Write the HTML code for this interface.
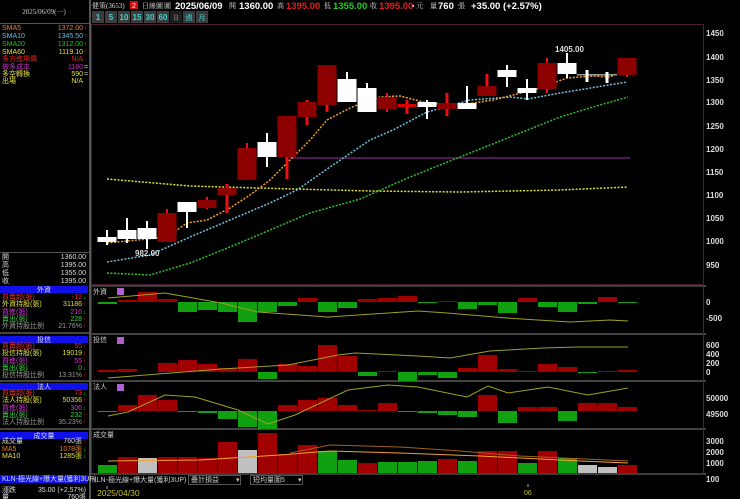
<!DOCTYPE html>
<html><head><meta charset="utf-8"><style>
html,body{margin:0;padding:0;background:#000;width:740px;height:499px;overflow:hidden}
svg{display:block}
text{font-family:"Liberation Sans","Noto Sans CJK TC",sans-serif}
.l{font-size:7px;font-family:"Liberation Serif","Noto Serif CJK SC",serif}
.ax{font-size:8px;fill:#ddd;font-weight:bold}
</style></head><body>
<svg width="740" height="499" viewBox="0 0 740 499" xmlns="http://www.w3.org/2000/svg">
<rect width="740" height="499" fill="#000"/>
<!-- left panel separators -->
<rect x="89" y="0" width="2" height="499" fill="#555"/>
<rect x="0" y="23" width="89" height="1" fill="#555"/>
<text x="44" y="14" class="l" fill="#ccc" text-anchor="middle">2025/06/09(一)</text>
<g class="l">
<text x="2" y="30" fill="#e08040">SMA5</text><text x="83" y="30" fill="#e08040" text-anchor="end">1372.00</text>
<text x="2" y="38" fill="#60c0e0">SMA10</text><text x="83" y="38" fill="#60c0e0" text-anchor="end">1345.50</text>
<text x="2" y="46" fill="#20c020">SMA20</text><text x="83" y="46" fill="#20c020" text-anchor="end">1312.00</text>
<text x="2" y="54" fill="#e0e040">SMA60</text><text x="83" y="54" fill="#e0e040" text-anchor="end">1119.10</text>
<text x="2" y="61" fill="#e02020">多方進場價</text><text x="83" y="61" fill="#e02020" text-anchor="end">N/A</text>
<text x="2" y="69" fill="#c030c0">做多成本</text><text x="83" y="69" fill="#c030c0" text-anchor="end">1180</text>
<text x="2" y="76" fill="#e0e040">多空轉換</text><text x="83" y="76" fill="#e0e040" text-anchor="end">590</text>
<text x="2" y="83" fill="#e0e040">出場</text><text x="83" y="83" fill="#e0e040" text-anchor="end">N/A</text>
</g>
<g fill="#f22" font-size="7"><text x="84" y="30">↑</text><text x="84" y="38">↑</text><text x="84" y="46">↑</text><text x="84" y="54">↑</text></g>
<g fill="#ccc" font-size="7"><text x="84" y="69">=</text><text x="84" y="76">=</text></g>
<rect x="0" y="252" width="89" height="1" fill="#555"/>
<g class="l" fill="#ddd">
<text x="2" y="259">開</text><text x="86" y="259" text-anchor="end">1360.00</text>
<text x="2" y="267">高</text><text x="86" y="267" text-anchor="end">1395.00</text>
<text x="2" y="275">低</text><text x="86" y="275" text-anchor="end">1355.00</text>
<text x="2" y="283">收</text><text x="86" y="283" text-anchor="end">1395.00</text>
</g>
<!-- blocks -->
<g class="l">
<rect x="0" y="286" width="88" height="7" fill="#1010e8"/><text x="44" y="292" fill="#ddd" text-anchor="middle">外資</text>
<text x="2" y="299" fill="#e03030">買賣超(張)</text><text x="82" y="299" fill="#e03030" text-anchor="end">-12</text>
<text x="2" y="306" fill="#e0e040">外資持股(張)</text><text x="82" y="306" fill="#e0e040" text-anchor="end">31186</text>
<text x="2" y="314" fill="#d030d0">買進(張)</text><text x="82" y="314" fill="#d030d0" text-anchor="end">216</text>
<text x="2" y="321" fill="#40d040">賣出(張)</text><text x="82" y="321" fill="#40d040" text-anchor="end">228</text>
<text x="2" y="328" fill="#999">外資持股比例</text><text x="82" y="328" fill="#999" text-anchor="end">21.76%</text>
<rect x="0" y="332" width="89" height="2" fill="#444"/>
<rect x="0" y="336" width="88" height="7" fill="#1010e8"/><text x="44" y="342" fill="#ddd" text-anchor="middle">投信</text>
<text x="2" y="348" fill="#e03030">買賣超(張)</text><text x="82" y="348" fill="#e03030" text-anchor="end">55</text>
<text x="2" y="355" fill="#e0e040">投信持股(張)</text><text x="82" y="355" fill="#e0e040" text-anchor="end">19019</text>
<text x="2" y="363" fill="#d030d0">買進(張)</text><text x="82" y="363" fill="#d030d0" text-anchor="end">55</text>
<text x="2" y="370" fill="#40d040">賣出(張)</text><text x="82" y="370" fill="#40d040" text-anchor="end">0</text>
<text x="2" y="377" fill="#999">投信持股比例</text><text x="82" y="377" fill="#999" text-anchor="end">13.31%</text>
<rect x="0" y="380" width="89" height="2" fill="#444"/>
<rect x="0" y="383" width="88" height="7" fill="#1010e8"/><text x="44" y="389" fill="#ddd" text-anchor="middle">法人</text>
<text x="2" y="395" fill="#e03030">買賣超(張)</text><text x="82" y="395" fill="#e03030" text-anchor="end">73</text>
<text x="2" y="402" fill="#e0e040">法人持股(張)</text><text x="82" y="402" fill="#e0e040" text-anchor="end">50356</text>
<text x="2" y="410" fill="#d030d0">買進(張)</text><text x="82" y="410" fill="#d030d0" text-anchor="end">306</text>
<text x="2" y="417" fill="#40d040">賣出(張)</text><text x="82" y="417" fill="#40d040" text-anchor="end">232</text>
<text x="2" y="424" fill="#999">法人持股比例</text><text x="82" y="424" fill="#999" text-anchor="end">35.23%</text>
<rect x="0" y="428" width="89" height="2" fill="#444"/>
<rect x="0" y="432" width="88" height="7" fill="#1010e8"/><text x="44" y="438" fill="#ddd" text-anchor="middle">成交量</text>
<text x="2" y="443" fill="#ddd">成交量</text><text x="82" y="443" fill="#ddd" text-anchor="end">760張</text>
<text x="2" y="451" fill="#e08030">MA5</text><text x="82" y="451" fill="#e08030" text-anchor="end">1078張</text>
<text x="2" y="458" fill="#e0e040">MA10</text><text x="82" y="458" fill="#e0e040" text-anchor="end">1285張</text>
<rect x="0" y="475" width="88" height="8" fill="#1010e8"/><text x="2" y="481" fill="#ddd">KLN-極光線+爆大量(獲利3UP)</text>
<text x="2" y="492" fill="#ddd">漲跌</text><text x="86" y="492" fill="#ddd" text-anchor="end">35.00 (+2.57%)</text>
<text x="2" y="499" fill="#ddd">量</text><text x="86" y="499" fill="#ddd" text-anchor="end">760張</text>
</g>
<g fill="#f22" font-size="6"><text x="83" y="306">↑</text><text x="83" y="321">↑</text><text x="83" y="328">↑</text><text x="83" y="348">↑</text><text x="83" y="355">↑</text><text x="83" y="363">↑</text><text x="83" y="377">↑</text><text x="83" y="402">↑</text><text x="83" y="417">↑</text><text x="83" y="424">↑</text><text x="83" y="443">↑</text></g>
<g fill="#2d2" font-size="6"><text x="83" y="299">↓</text><text x="83" y="314">↓</text><text x="83" y="370">↓</text><text x="83" y="395">↓</text><text x="83" y="410">↓</text><text x="83" y="451">↓</text><text x="83" y="458">↓</text></g>

<!-- header -->
<text x="92" y="8" font-size="7.5" fill="#ddd" class="l">健策(3653)</text>
<rect x="130" y="1" width="8" height="8" fill="#d01010"/><text x="132" y="8" font-size="7" fill="#fff">2</text>
<text x="142" y="8" class="l" fill="#ddd">日線圖</text>
<text x="164" y="8" class="l" fill="#ddd">圖</text>
<text x="175" y="9" font-size="9.5" font-weight="bold" fill="#fff">2025/06/09</text>
<text x="229" y="8" class="l" fill="#ddd">開</text><text x="239" y="9" font-size="9.5" font-weight="bold" fill="#fff">1360.00</text>
<text x="277" y="8" class="l" fill="#ddd">高</text><text x="286" y="9" font-size="9.5" font-weight="bold" fill="#e02020">1395.00</text>
<text x="324" y="8" class="l" fill="#ddd">低</text><text x="333" y="9" font-size="9.5" font-weight="bold" fill="#20d020">1355.00</text>
<text x="370" y="8" class="l" fill="#ddd">收</text><text x="379" y="9" font-size="9.5" font-weight="bold" fill="#e02020">1395.00</text>
<text x="412" y="8" class="l" fill="#ddd">▪ 元</text>
<text x="430" y="8" class="l" fill="#ddd">量</text><text x="438" y="9" font-size="9.5" font-weight="bold" fill="#fff">760</text>
<text x="458" y="8" class="l" fill="#ddd">張</text>
<text x="471" y="9" font-size="9.5" font-weight="bold" fill="#fff">+35.00 (+2.57%)</text>
<!-- period buttons -->
<g font-size="8" font-weight="bold" fill="#40d0d0" text-anchor="middle">
<rect x="92" y="11" width="12" height="12" fill="#3c3c3c"/><text x="98" y="20">1</text>
<rect x="105" y="11" width="12" height="12" fill="#3c3c3c"/><text x="111" y="20">5</text>
<rect x="118" y="11" width="12" height="12" fill="#3c3c3c"/><text x="124" y="20">10</text>
<rect x="131" y="11" width="12" height="12" fill="#3c3c3c"/><text x="137" y="20">15</text>
<rect x="144" y="11" width="12" height="12" fill="#3c3c3c"/><text x="150" y="20">30</text>
<rect x="157" y="11" width="12" height="12" fill="#3c3c3c"/><text x="163" y="20">60</text>
<rect x="170" y="11" width="12" height="12" fill="#1e1e1e"/><text x="176" y="20" font-size="6" fill="#666">日</text>
<rect x="183" y="11" width="12" height="12" fill="#3c3c3c"/><text x="189" y="20" font-size="7" font-weight="normal">週</text>
<rect x="196" y="11" width="12" height="12" fill="#3c3c3c"/><text x="202" y="20" font-size="7" font-weight="normal">月</text>
</g>

<!-- main chart frame -->
<rect x="91.5" y="24.5" width="612" height="260" fill="none" stroke="#4a2030"/>
<g class="ax">
<text x="706" y="36">1450</text><text x="706" y="60">1400</text><text x="706" y="83">1350</text><text x="706" y="105">1300</text><text x="706" y="129">1250</text><text x="706" y="152">1200</text><text x="706" y="175">1150</text><text x="706" y="198">1100</text><text x="706" y="221">1050</text><text x="706" y="244">1000</text><text x="706" y="268">950</text>
</g>
<line x1="290" y1="158" x2="630" y2="158" stroke="#6a2070" stroke-width="1.5"/>
<!-- MAs -->
<g fill="none" stroke-width="1.5" stroke-dasharray="2 1.5">
<polyline stroke="#e0e030" points="107,179 190,186 257,188 370,191 460,192 560,190 628,187"/>
<polyline stroke="#30c030" points="107,273 150,275 190,263 230,247 270,230 310,213 360,199 410,177 460,157 510,137 560,117 593,107 628,97"/>
<polyline stroke="#70c0e0" points="107,262 150,255 190,237 230,220 270,203 297,190 330,167 370,140 393,130 427,112 470,100 510,97 528,99 560,93 627,82"/>
<polyline stroke="#f0a030" points="107,243 167,237 187,223 207,220 230,208 250,195 270,180 290,160 310,140 327,120 350,108 370,100 380,97 400,96 427,103 460,105 493,100 513,95 540,88 567,78 593,76 610,77 628,69"/>
</g>
<!-- candles -->
<g>
<g fill="#fff">
<rect x="106" y="230" width="2" height="15"/><rect x="97.5" y="237" width="19" height="5"/>
<rect x="126" y="218" width="2" height="25"/><rect x="117.5" y="230" width="19" height="9"/>
<rect x="146" y="221" width="2" height="28"/><rect x="137.5" y="228" width="19" height="11"/>
<rect x="186" y="202" width="2" height="26"/><rect x="177.5" y="202" width="19" height="10"/>
<rect x="266" y="133" width="2" height="34"/><rect x="257.5" y="142" width="19" height="15"/>
<rect x="346" y="72" width="2" height="30"/><rect x="337.5" y="79" width="19" height="23"/>
<rect x="366" y="83" width="2" height="29"/><rect x="357.5" y="88" width="19" height="24"/>
<rect x="426" y="100" width="2" height="19"/><rect x="417.5" y="102" width="19" height="5"/>
<rect x="466" y="86" width="2" height="23"/><rect x="457.5" y="103" width="19" height="6"/>
<rect x="506" y="65" width="2" height="22"/><rect x="497.5" y="70" width="19" height="7"/>
<rect x="526" y="79" width="2" height="21"/><rect x="517.5" y="88" width="19" height="5"/>
<rect x="566" y="53" width="2" height="25"/><rect x="557.5" y="63" width="19" height="11"/>
<rect x="577" y="74" width="40" height="1.5" fill="#999"/>
<rect x="585.5" y="70" width="3" height="12"/>
<rect x="605.5" y="72" width="3" height="11"/>
</g>
<g fill="#ee1010">
<rect x="166" y="209" width="2" height="33"/><rect x="206" y="197" width="2" height="12"/><rect x="225.5" y="184" width="3" height="29"/>
<rect x="246" y="143" width="2" height="37"/><rect x="285.5" y="116" width="3" height="63"/><rect x="305.5" y="100" width="3" height="25"/>
<rect x="325.5" y="65" width="3" height="47"/><rect x="386" y="93" width="2" height="19"/><rect x="405.5" y="100" width="3" height="14"/>
<rect x="445.5" y="93" width="3" height="23"/><rect x="485.5" y="74" width="3" height="22"/><rect x="546" y="58" width="2" height="35"/><rect x="626" y="58" width="2" height="19"/>
</g>
<g fill="#8c0000">
<rect x="157.5" y="213" width="19" height="29"/><rect x="197.5" y="200" width="19" height="8"/><rect x="217.5" y="188" width="19" height="7"/>
<rect x="237.5" y="148" width="19" height="32"/><rect x="277.5" y="116" width="19" height="41"/><rect x="297.5" y="102" width="19" height="15"/>
<rect x="317.5" y="65" width="19" height="40"/><rect x="377.5" y="97" width="19" height="12"/><rect x="397.5" y="104" width="19" height="3" fill="#d00"/>
<rect x="437.5" y="103" width="19" height="6"/><rect x="477.5" y="86" width="19" height="10"/><rect x="537.5" y="63" width="19" height="26"/><rect x="617.5" y="58" width="19" height="17"/>
</g>
</g>
<text x="135" y="256" font-size="8" fill="#ddd" font-weight="bold">982.00</text>
<text x="555" y="52" font-size="8" fill="#ddd" font-weight="bold">1405.00</text>

<!-- sub panel separators -->
<g fill="#444">
<rect x="91" y="285" width="615" height="2"/>
<rect x="91" y="333" width="615" height="2"/>
<rect x="91" y="380" width="615" height="2"/>
<rect x="91" y="428" width="615" height="2"/>
<rect x="91" y="473" width="615" height="2"/>
</g>
<rect x="91.5" y="286" width="612" height="188" fill="none" stroke="#333"/>
<g class="l" fill="#ccc">
<text x="93" y="294">外資</text><text x="93" y="342">投信</text><text x="93" y="389">法人</text><text x="93" y="437">成交量</text>
</g>
<g fill="#b060d0"><rect x="117" y="288" width="7" height="7"/><rect x="117" y="337" width="7" height="7"/><rect x="117" y="384" width="7" height="7"/></g>
<g class="ax">
<text x="706" y="305">0</text><text x="706" y="321">-500</text>
<text x="706" y="348">600</text><text x="706" y="357">400</text><text x="706" y="366">200</text><text x="706" y="375">0</text>
<text x="706" y="401">50000</text><text x="706" y="417">49500</text>
<text x="706" y="444">3000</text><text x="706" y="455">2000</text><text x="706" y="466">1000</text><text x="706" y="482">100</text>
</g>
<!-- 外資 bars (zero 302) -->
<g fill="#a00000">
<rect x="118" y="300" width="19" height="2"/><rect x="138" y="292" width="19" height="10"/><rect x="158" y="299" width="19" height="3"/>
<rect x="298" y="298" width="19" height="4"/><rect x="358" y="299" width="19" height="3"/><rect x="378" y="298" width="19" height="4"/><rect x="398" y="296" width="19" height="6"/>
<rect x="438" y="301" width="19" height="1"/><rect x="518" y="298" width="19" height="4"/><rect x="598" y="297" width="19" height="5"/>
</g>
<g fill="#10a010">
<rect x="98" y="302" width="19" height="2"/><rect x="178" y="302" width="19" height="10"/><rect x="198" y="302" width="19" height="8"/><rect x="218" y="302" width="19" height="10"/>
<rect x="238" y="302" width="19" height="20"/><rect x="258" y="302" width="19" height="10"/><rect x="278" y="302" width="19" height="4"/><rect x="318" y="302" width="19" height="10"/>
<rect x="338" y="302" width="19" height="6"/><rect x="418" y="302" width="19" height="1"/><rect x="458" y="302" width="19" height="7"/><rect x="478" y="302" width="19" height="3"/>
<rect x="498" y="302" width="19" height="11"/><rect x="538" y="302" width="19" height="5"/><rect x="558" y="302" width="19" height="10"/><rect x="578" y="302" width="19" height="2"/><rect x="618" y="302" width="19" height="1"/>
</g>
<polyline fill="none" stroke="#a0a020" stroke-width="1" points="108,298 165,293 221,303 258,312 328,317 418,311 447,313 507,318 570,322 610,320 628,321"/>
<!-- 投信 bars (zero 372) -->
<g fill="#a00000">
<rect x="98" y="370" width="19" height="2"/><rect x="118" y="369" width="19" height="3"/><rect x="158" y="363" width="19" height="9"/><rect x="178" y="360" width="19" height="12"/>
<rect x="198" y="364" width="19" height="8"/><rect x="218" y="368" width="19" height="4"/><rect x="238" y="359" width="19" height="13"/><rect x="278" y="364" width="19" height="8"/>
<rect x="298" y="366" width="19" height="6"/><rect x="318" y="345" width="19" height="27"/><rect x="338" y="356" width="19" height="16"/><rect x="378" y="371" width="19" height="1"/>
<rect x="458" y="368" width="19" height="4"/><rect x="478" y="355" width="19" height="17"/><rect x="498" y="369" width="19" height="3"/><rect x="518" y="371" width="19" height="1"/>
<rect x="538" y="364" width="19" height="8"/><rect x="558" y="367" width="19" height="5"/><rect x="598" y="371" width="19" height="1"/><rect x="618" y="370" width="19" height="2"/>
</g>
<g fill="#10a010">
<rect x="258" y="372" width="19" height="7"/><rect x="358" y="372" width="19" height="4"/><rect x="398" y="372" width="19" height="9"/><rect x="418" y="372" width="19" height="3"/>
<rect x="438" y="372" width="19" height="6"/><rect x="578" y="372" width="19" height="1"/>
</g>
<polyline fill="none" stroke="#a0a020" stroke-width="1" points="108,378 221,369 288,365 338,355 355,353 418,356 450,358 490,351 543,348 577,347 628,347"/>
<!-- 法人 bars (zero 411) -->
<g fill="#a00000">
<rect x="118" y="405" width="19" height="6"/><rect x="138" y="395" width="19" height="16"/><rect x="158" y="400" width="19" height="11"/>
<rect x="278" y="405" width="19" height="6"/><rect x="298" y="400" width="19" height="11"/><rect x="318" y="398" width="19" height="13"/><rect x="338" y="405" width="19" height="6"/>
<rect x="358" y="410" width="19" height="1"/><rect x="378" y="403" width="19" height="8"/><rect x="478" y="395" width="19" height="16"/><rect x="518" y="407" width="19" height="4"/>
<rect x="538" y="407" width="19" height="4"/><rect x="578" y="403" width="19" height="8"/><rect x="598" y="403" width="19" height="8"/><rect x="618" y="407" width="19" height="4"/>
</g>
<g fill="#10a010">
<rect x="98" y="411" width="19" height="1"/><rect x="178" y="411" width="19" height="1"/><rect x="198" y="411" width="19" height="2"/><rect x="218" y="411" width="19" height="8"/>
<rect x="238" y="411" width="19" height="16"/><rect x="258" y="411" width="19" height="18"/><rect x="398" y="411" width="19" height="1"/><rect x="418" y="411" width="19" height="2"/>
<rect x="438" y="411" width="19" height="4"/><rect x="458" y="411" width="19" height="6"/><rect x="498" y="411" width="19" height="12"/><rect x="558" y="411" width="19" height="10"/>
</g>
<polyline fill="none" stroke="#a0a020" stroke-width="1" points="108,416 128,412 165,395 195,397 238,410 268,424 295,415 348,390 388,385 418,387 467,397 488,386 508,393 548,387 588,395 628,388"/>
<!-- volume (bottom 473) -->
<g fill="#a00000">
<rect x="118" y="457" width="19" height="16"/><rect x="158" y="457" width="19" height="16"/><rect x="178" y="457" width="19" height="16"/><rect x="198" y="458" width="19" height="15"/>
<rect x="218" y="442" width="19" height="31"/><rect x="258" y="433" width="19" height="40"/><rect x="278" y="454" width="19" height="19"/><rect x="298" y="445" width="19" height="28"/>
<rect x="358" y="463" width="19" height="10"/><rect x="438" y="459" width="19" height="14"/><rect x="478" y="451" width="19" height="22"/><rect x="498" y="451" width="19" height="22"/>
<rect x="538" y="451" width="19" height="22"/><rect x="618" y="465" width="19" height="8"/>
</g>
<g fill="#10a010">
<rect x="98" y="465" width="19" height="8"/><rect x="318" y="451" width="19" height="22"/><rect x="338" y="460" width="19" height="13"/><rect x="378" y="462" width="19" height="11"/>
<rect x="398" y="462" width="19" height="11"/><rect x="418" y="461" width="19" height="12"/><rect x="458" y="461" width="19" height="12"/><rect x="518" y="463" width="19" height="10"/><rect x="558" y="458" width="19" height="15"/>
</g>
<g fill="#c0c0c0"><rect x="138" y="458" width="19" height="15"/><rect x="238" y="450" width="19" height="23"/><rect x="578" y="465" width="19" height="8"/><rect x="598" y="467" width="19" height="6"/></g>
<polyline fill="none" stroke="#f0a030" stroke-width="1" points="108,461 200,460 280,455 330,451 400,453 480,456 540,459 580,461 628,463"/>
<polyline fill="none" stroke="#a06020" stroke-width="1" points="290,453 330,445 400,447 460,451 520,456 628,461"/>
<!-- bottom strip -->
<g class="l" fill="#ccc">
<text x="92" y="482">KLN-極光線+爆大量(獲利3UP)</text>
<rect x="188.5" y="475.5" width="52" height="9" fill="none" stroke="#555"/><text x="191" y="482">疊計損益</text><text x="236" y="482">▾</text>
<rect x="250.5" y="475.5" width="52" height="9" fill="none" stroke="#555"/><text x="253" y="482">短均量圖5</text><text x="298" y="482">▾</text>
</g>
<line x1="107" y1="486" x2="107" y2="489" stroke="#aaa"/>
<text x="97" y="496" font-size="8.5" fill="#c0c020">2025/04/30</text>
<line x1="528" y1="484" x2="528" y2="487" stroke="#aaa"/>
<text x="524" y="495" font-size="7" fill="#c0c020">06</text>
</svg>
</body></html>
